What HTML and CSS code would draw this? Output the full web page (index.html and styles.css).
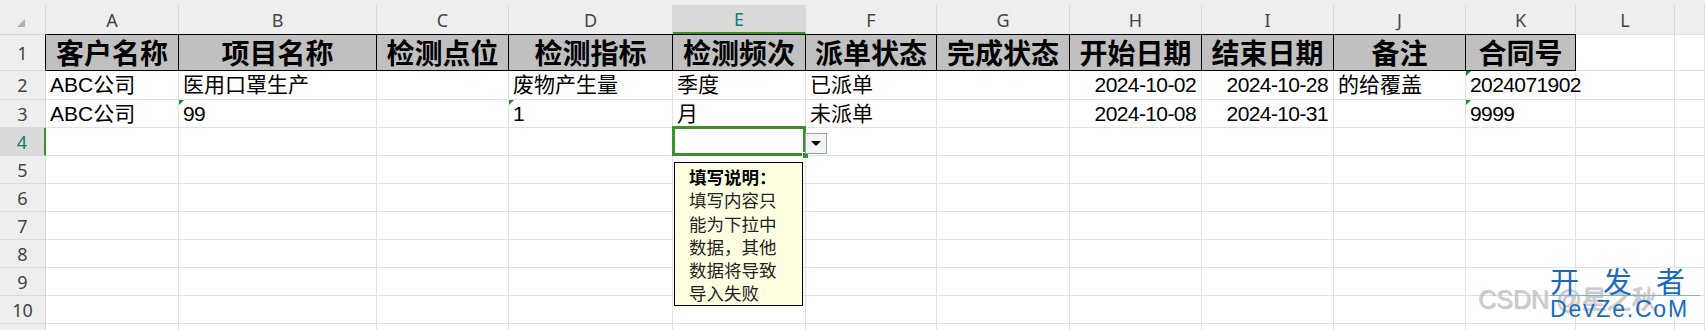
FILE: index.html
```html
<!DOCTYPE html>
<html lang="zh-CN">
<head>
    <meta charset="UTF-8">
    <meta name="viewport" content="width=device-width, initial-scale=1.0">
    <title>检测任务表</title>
    <link rel="stylesheet" href="styles.css">
</head>
<body>
    <div class="top-band"></div>

    <table class="sheet">
        <colgroup>
            <col class="w-rh">
            <col class="w-a">
            <col class="w-b">
            <col class="w-c">
            <col class="w-d">
            <col class="w-e">
            <col class="w-f">
            <col class="w-g">
            <col class="w-h">
            <col class="w-i">
            <col class="w-j">
            <col class="w-k">
            <col class="w-l">
            <col class="w-m">
        </colgroup>

        <!-- Column letters -->
        <tr class="col-heads">
            <th class="corner"><span class="corner-mark"></span></th>
            <th>A</th>
            <th>B</th>
            <th>C</th>
            <th>D</th>
            <th class="active">E</th>
            <th>F</th>
            <th>G</th>
            <th>H</th>
            <th>I</th>
            <th>J</th>
            <th>K</th>
            <th>L</th>
            <th></th>
        </tr>

        <!-- Row 1: table titles -->
        <tr class="row-title">
            <th class="rh rh-title">1</th>
            <td class="hd">客户名称</td>
            <td class="hd">项目名称</td>
            <td class="hd">检测点位</td>
            <td class="hd">检测指标</td>
            <td class="hd">检测频次</td>
            <td class="hd">派单状态</td>
            <td class="hd">完成状态</td>
            <td class="hd">开始日期</td>
            <td class="hd">结束日期</td>
            <td class="hd">备注</td>
            <td class="hd">合同号</td>
            <td class="plain"></td>
            <td class="plain"></td>
        </tr>

        <tr class="row-2">
            <th class="rh">2</th>
            <td>ABC公司</td>
            <td>医用口罩生产</td>
            <td></td>
            <td>废物产生量</td>
            <td>季度</td>
            <td>已派单</td>
            <td></td>
            <td class="num right">2024-10-02</td>
            <td class="num right">2024-10-28</td>
            <td>的给覆盖</td>
            <td class="num flag">2024071902</td>
            <td></td>
            <td></td>
        </tr>

        <tr class="row">
            <th class="rh">3</th>
            <td>ABC公司</td>
            <td class="num flag">99</td>
            <td></td>
            <td class="num flag">1</td>
            <td>月</td>
            <td>未派单</td>
            <td></td>
            <td class="num right">2024-10-08</td>
            <td class="num right">2024-10-31</td>
            <td></td>
            <td class="num flag">9999</td>
            <td></td>
            <td></td>
        </tr>

        <tr class="row">
            <th class="rh active">4</th>
            <td></td>
            <td></td>
            <td></td>
            <td></td>
            <td class="current">
                <div class="selection"><span class="handle"></span></div>
                <div class="dropdown-btn"><span class="arrow"></span></div>
                <div class="input-tip">
                    <strong>填写说明：</strong><br>
                    填写内容只<br>
                    能为下拉中<br>
                    数据，其他<br>
                    数据将导致<br>
                    导入失败
                </div>
            </td>
            <td></td>
            <td></td>
            <td></td>
            <td></td>
            <td></td>
            <td></td>
            <td></td>
            <td></td>
        </tr>

        <tr class="row"><th class="rh">5</th><td></td><td></td><td></td><td></td><td></td><td></td><td></td><td></td><td></td><td></td><td></td><td></td><td></td></tr>
        <tr class="row"><th class="rh">6</th><td></td><td></td><td></td><td></td><td></td><td></td><td></td><td></td><td></td><td></td><td></td><td></td><td></td></tr>
        <tr class="row"><th class="rh">7</th><td></td><td></td><td></td><td></td><td></td><td></td><td></td><td></td><td></td><td></td><td></td><td></td><td></td></tr>
        <tr class="row"><th class="rh">8</th><td></td><td></td><td></td><td></td><td></td><td></td><td></td><td></td><td></td><td></td><td></td><td></td><td></td></tr>
        <tr class="row"><th class="rh">9</th><td></td><td></td><td></td><td></td><td></td><td></td><td></td><td></td><td></td><td></td><td></td><td></td><td></td></tr>
        <tr class="row"><th class="rh">10</th><td></td><td></td><td></td><td></td><td></td><td></td><td></td><td></td><td></td><td></td><td></td><td></td><td></td></tr>
        <tr class="row-cut"><th class="rh"></th><td></td><td></td><td></td><td></td><td></td><td></td><td></td><td></td><td></td><td></td><td></td><td></td><td></td></tr>
    </table>

    <!-- Watermarks -->
    <div class="mark-csdn">CSDN @星之秋</div>
    <div class="mark-devze">
        <div class="mark-cn">开发者</div>
        <div class="mark-en">DevZe.CoM</div>
    </div>
</body>
</html>
```

FILE: styles.css
```css
* {
    box-sizing: border-box;
    margin: 0;
    padding: 0;
}

body {
    width: 1705px;
    height: 330px;
    overflow: hidden;
    background-color: white;
    font-family: "Liberation Sans", "Noto Sans CJK SC", sans-serif;
    position: relative;
}

.top-band {
    height: 5px;
    background-color: #eeeeee;
}

.sheet {
    table-layout: fixed;
    width: 1705px;
    border-collapse: separate;
    border-spacing: 0;
}

.w-rh { width: 46px; }
.w-a { width: 133px; }
.w-b { width: 198px; }
.w-c { width: 132px; }
.w-d { width: 164px; }
.w-e { width: 133px; }
.w-f { width: 131px; }
.w-g { width: 133px; }
.w-h { width: 132px; }
.w-i { width: 132px; }
.w-j { width: 132px; }
.w-k { width: 110px; }
.w-l { width: 99px; }
.w-m { width: 30px; }

/* column letters */
.col-heads {
    height: 29px;
}

.col-heads th {
    background-color: #eeeeee;
    border-right: 1px solid #d9d9d9;
    font-family: "Noto Sans", sans-serif;
    font-weight: normal;
    font-size: 18px;
    line-height: 1;
    color: #444;
    text-align: center;
    vertical-align: middle;
}

.col-heads th.active {
    background-color: #dadada;
    color: #187f6e;
    border-bottom: 2px solid #3f8f2c;
}

.corner {
    text-align: center;
}

.corner-mark {
    display: inline-block;
    width: 0;
    height: 0;
    border-left: 8px solid transparent;
    border-bottom: 8px solid #b3b3b3;
    margin-left: -4px;
    margin-top: 4px;
}

/* row numbers */
.rh {
    background-color: #eeeeee;
    border-right: 1px solid #d4d4d4;
    border-bottom: 1px solid #dadada;
    font-family: "Noto Sans", sans-serif;
    font-weight: normal;
    font-size: 18px;
    line-height: 1;
    color: #444;
    text-align: center;
    vertical-align: middle;
}

.rh.active {
    background-color: #dadada;
    color: #187f6e;
    border-right: 2px solid #3f8f2c;
}

.rh-title {
    border-top: 1px solid #d4d4d4;
    border-right: 1px solid #000;
}

/* cells */
td {
    border-right: 1px solid #e1e1e1;
    border-bottom: 1px solid #e1e1e1;
    padding: 0 4px;
    font-size: 21px;
    line-height: 1.2;
    color: #000;
    white-space: nowrap;
    vertical-align: middle;
}

.row-title {
    height: 37px;
}

.row-2 {
    height: 29px;
}

.row {
    height: 28px;
}

.row-cut {
    height: 7px;
}

.row-cut td,
.row-cut th {
    border-bottom: none;
    line-height: 0;
    font-size: 0;
}

.hd {
    background-color: #c0c0c0;
    border-top: 1px solid #000;
    border-right: 1px solid #000;
    border-bottom: 1px solid #000;
    font-family: "Noto Sans CJK SC", sans-serif;
    font-weight: bold;
    font-size: 28px;
    text-align: center;
    padding: 0;
}

.plain {
    border-top: 1px solid #e1e1e1;
}

.num {
    letter-spacing: -0.6px;
}

.right {
    text-align: right;
    padding-right: 5px;
}

.flag {
    position: relative;
}

.flag::before {
    content: "";
    position: absolute;
    top: 0;
    left: 0;
    border-top: 5px solid #1f8a1f;
    border-right: 5px solid transparent;
}

/* active cell with its validation list */
.current {
    position: relative;
}

.selection {
    position: absolute;
    top: -2px;
    left: -1px;
    right: -1px;
    bottom: -1px;
    border: 3px solid #3f8f2c;
}

.handle {
    position: absolute;
    right: -6px;
    bottom: -6px;
    width: 7px;
    height: 7px;
    background-color: #3f8f2c;
    border: 1px solid white;
}

.dropdown-btn {
    position: absolute;
    left: 100%;
    top: 5px;
    width: 22px;
    height: 21px;
    background-color: #f3f3f3;
    border: 1px solid #8fa5bf;
    display: flex;
    justify-content: center;
    align-items: center;
    z-index: 2;
}

.arrow {
    width: 0;
    height: 0;
    border-left: 5px solid transparent;
    border-right: 5px solid transparent;
    border-top: 5px solid #000;
}

.input-tip {
    position: absolute;
    left: 1px;
    top: 34px;
    width: 129px;
    height: 144px;
    background-color: #ffffe1;
    border: 1px solid #000;
    padding: 2px 0 0 14px;
    font-family: "Noto Sans CJK SC", sans-serif;
    font-size: 17.5px;
    line-height: 23.3px;
    color: #222;
    z-index: 3;
}

.input-tip strong {
    color: #000;
}

/* watermarks */
.mark-csdn {
    position: absolute;
    left: 1478px;
    top: 287px;
    font-size: 25px;
    line-height: 1;
    color: #cdcdcd;
    text-shadow: 1px 1px 1px rgba(0, 0, 0, 0.25);
    white-space: nowrap;
}

.mark-devze {
    position: absolute;
    left: 1550px;
    top: 266px;
    color: #1a6bbf;
}

.mark-cn {
    font-family: "Noto Sans CJK SC", sans-serif;
    font-size: 29px;
    line-height: 29px;
    letter-spacing: 24px;
    white-space: nowrap;
    border-bottom: 1px solid #6bb8ec;
    width: 150px;
}

.mark-en {
    font-size: 23px;
    line-height: 1;
    letter-spacing: 1.8px;
    margin-top: 2px;
    white-space: nowrap;
}
```
